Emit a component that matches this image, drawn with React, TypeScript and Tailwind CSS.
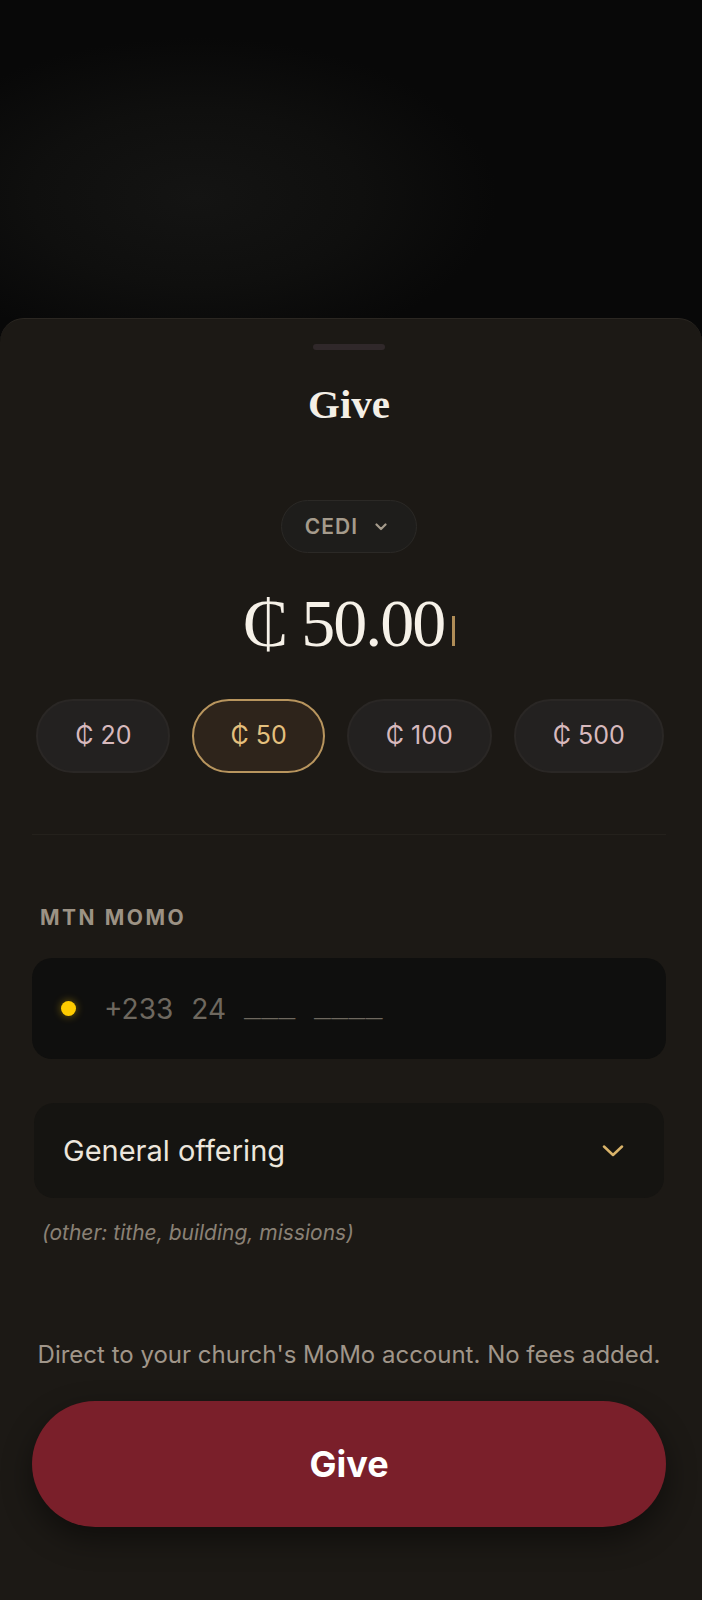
import React from "react";

const presets = [
    { label: "₵ 20", value: 20 },
    { label: "₵ 50", value: 50 },
    { label: "₵ 100", value: 100 },
    { label: "₵ 500", value: 500 }
];

const App: React.FC = () => {
    const selected = 50;

    return (
        <div className="w-full min-h-[1600px] flex flex-col bg-[#080808] font-['Inter','Roboto',sans-serif]">
            {/* blurred page behind the sheet */}
            <div className="h-[318px] shrink-0 bg-[radial-gradient(ellipse_300px_160px_at_28%_62%,#141413_0%,#0f0f0e_55%,#080808_100%)]" />

            <div className="flex-1 flex flex-col rounded-t-[24px] border-t border-[#2b2722] bg-[#1c1915] pl-8 pr-9 pb-[73px]">
                <div className="mt-[25px] self-center h-1.5 w-[72px] rounded-full bg-[#30282a]" />

                <h1 className="mt-[34px] text-center text-[41px] leading-none font-bold text-[#f4efe6] font-['Liberation_Serif',serif]">
                    Give
                </h1>

                <button className="mt-[75px] self-center h-[53px] flex items-center gap-[17px] pl-[23px] pr-[29px] rounded-full bg-[#1e1d1b] border border-[#2b2926]">
                    <span className="text-[21px] leading-none font-semibold tracking-[0.05em] text-[#a59b8c]">CEDI</span>
                    <svg width="12" height="8" viewBox="0 0 12 8" fill="none">
                        <path d="M1.5 1.5 6 6l4.5-4.5" stroke="#a59b8c" strokeWidth="2.2" strokeLinecap="round" strokeLinejoin="round" />
                    </svg>
                </button>

                <div className="mt-[36px] text-center text-[68px] leading-none tracking-[-2px] text-[#f6f1e8] font-['Liberation_Serif','DejaVu_Serif',serif]">
                    ₵ 50.00
                    <span className="inline-block ml-2 w-[3px] h-[30px] bg-[#b08d57]" />
                </div>

                <div className="mt-[42px] flex justify-center gap-[22px] pl-0.5">
                    {presets.map((p) =>
                        p.value === selected ? (
                            <button
                                key={p.value}
                                className="h-[74px] px-[36px] rounded-full bg-[#2e241b] border-2 border-[#b8955e] text-[25px] text-[#e4c07e]"
                            >
                                {p.label}
                            </button>
                        ) : (
                            <button
                                key={p.value}
                                className="h-[74px] px-[37px] rounded-full bg-[#232120] border-2 border-[#2a2725] text-[25px] text-[#d7b9bd]"
                            >
                                {p.label}
                            </button>
                        )
                    )}
                </div>

                <div className="mt-[61px] h-px bg-[#24211c]" />

                <div className="mt-[72px] pl-2 text-[21px] leading-none font-bold tracking-[0.12em] text-[#9c9284]">MTN MOMO</div>

                <div className="mt-[30px] h-[101px] flex items-center rounded-[20px] bg-[#0f0f0e] pl-[29px]">
                    <span className="w-[15px] h-[15px] rounded-full bg-[#ffcc00] shadow-[0_0_8px_rgba(255,204,0,0.45)]" />
                    <div className="ml-[28px] flex items-center gap-[18px] text-[28px] text-[#6e685f]">
                        <span>+233</span>
                        <span>24</span>
                        <span className="font-['Liberation_Mono',monospace] tracking-[0.5px]">___</span>
                        <span className="font-['Liberation_Mono',monospace] tracking-[0.5px]">____</span>
                    </div>
                </div>

                <div className="mt-[44px] mx-0.5 h-[95px] flex items-center justify-between rounded-[20px] bg-[#151411] pl-[29px] pr-[40px]">
                    <span className="text-[29px] text-[#ece6dc]">General offering</span>
                    <svg width="22" height="12" viewBox="0 0 22 12" fill="none">
                        <path d="M2 1.5l9 8.5 9-8.5" stroke="#d9b36a" strokeWidth="2.5" strokeLinecap="round" strokeLinejoin="round" />
                    </svg>
                </div>

                <p className="mt-[24px] pl-2.5 text-[21px] leading-none italic text-[#8a8175]">
                    (other: tithe, building, missions)
                </p>

                <p className="mt-[100px] text-center text-[24px] leading-none text-[#a0968a]">
                    Direct to your church's MoMo account. No fees added.
                </p>

                <button className="mt-[34px] h-[126px] w-full rounded-full bg-[#7a1f2a] text-[36px] font-bold text-white shadow-[0_12px_30px_rgba(0,0,0,0.45)]">
                    Give
                </button>
            </div>
        </div>
    );
};

export default App;
